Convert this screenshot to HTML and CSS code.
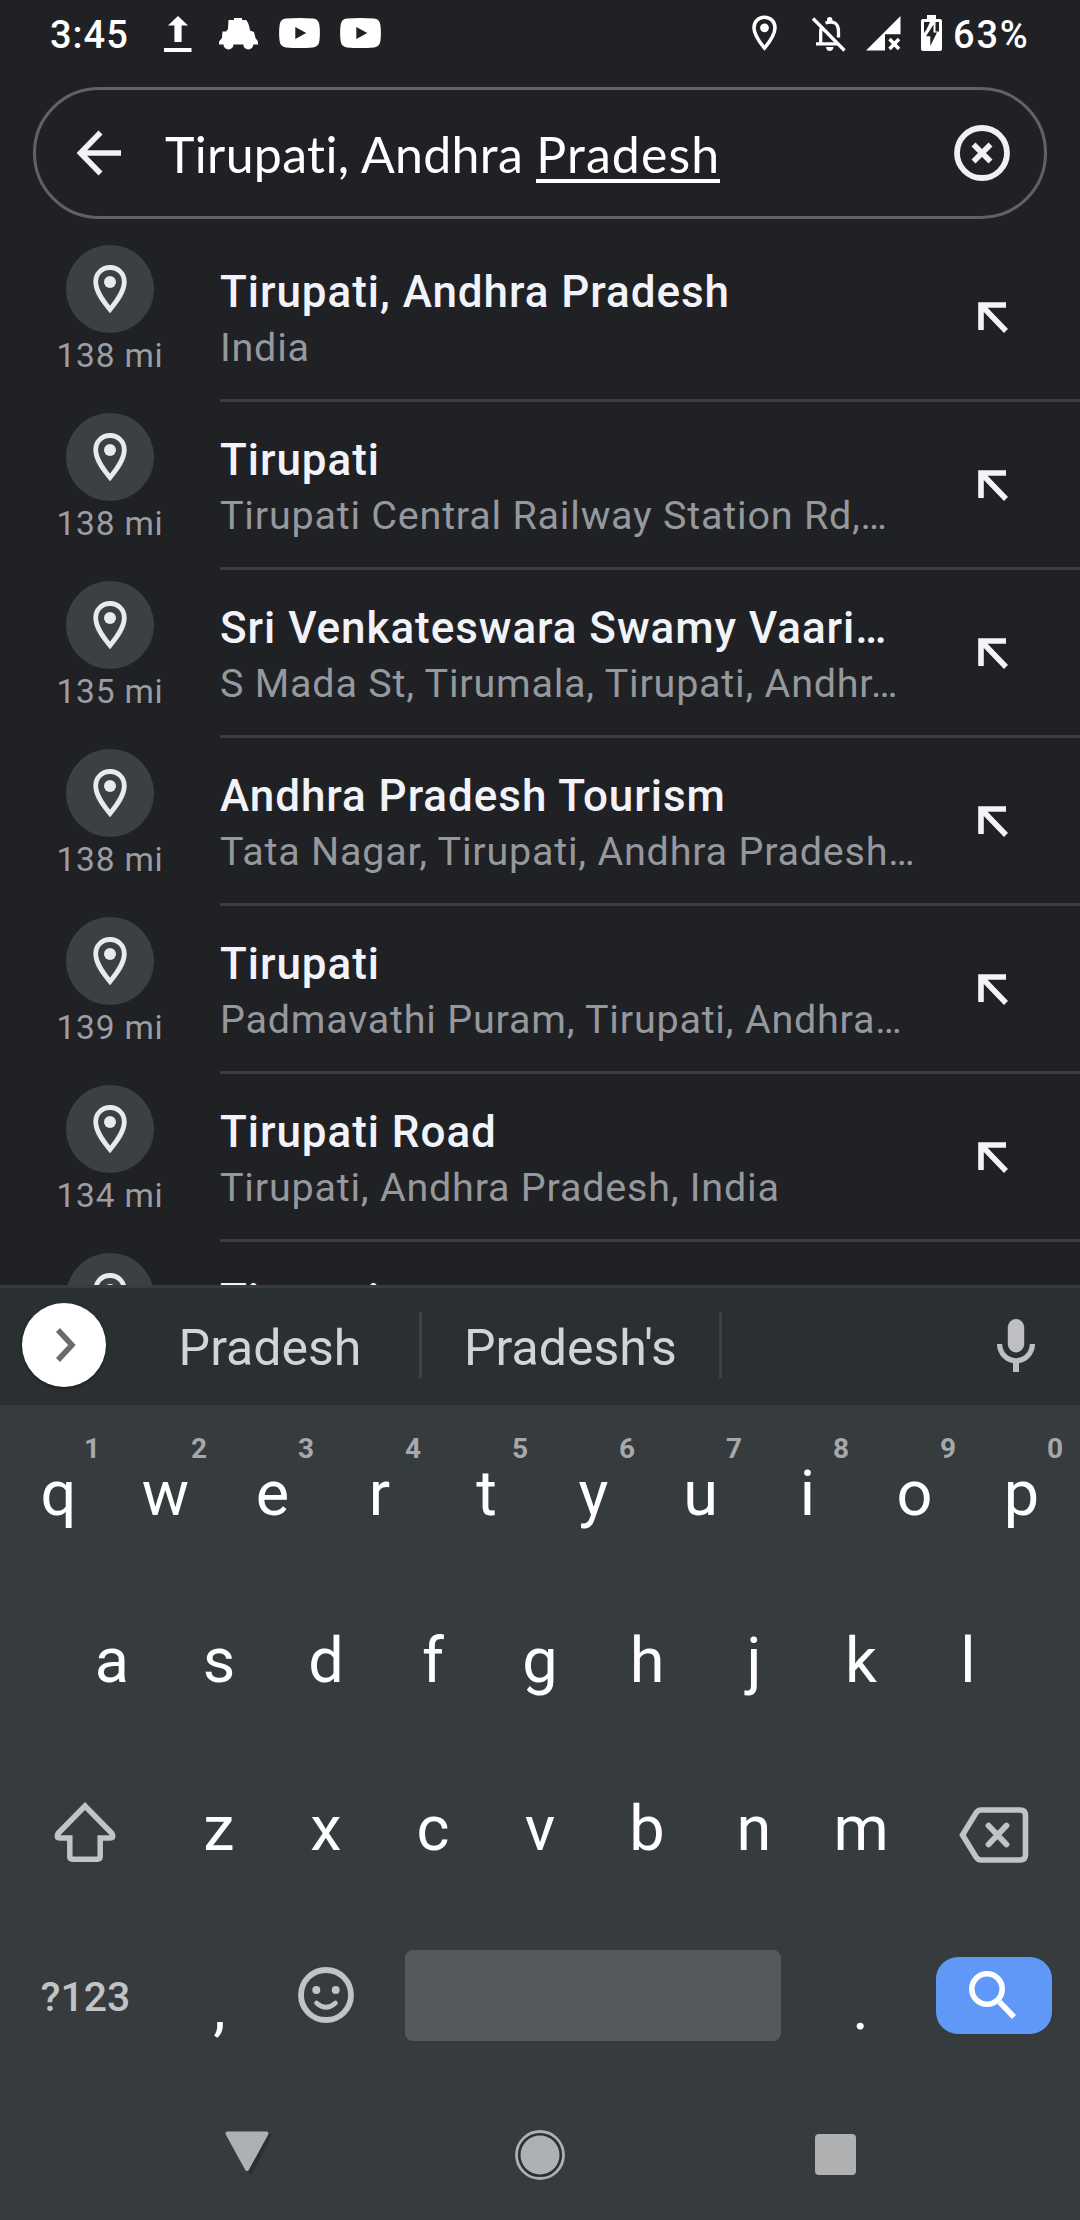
FILE: index.html
```html
<!DOCTYPE html>
<html lang="en">
<head>
<meta charset="utf-8">
<title>Search</title>
<link rel="stylesheet" href="styles.css">
</head>
<body>
<svg width="0" height="0" class="defs">
  <symbol id="pin" viewBox="0 0 34 48">
    <path d="M17 2.5C8.700 2.500 2.700 8.800 2.700 16.800C2.700 26.500 10 36 17 44.500C24 36 31.300 26.500 31.300 16.800C31.300 8.800 25.300 2.500 17 2.500Z" fill="none" stroke="currentColor" stroke-width="4.800"/>
    <circle cx="17" cy="17" r="6" fill="currentColor"/>
  </symbol>
  <symbol id="insert" viewBox="0 0 30 31">
    <path d="M28 3H3V28M3 3L28 29" fill="none" stroke="currentColor" stroke-width="5.600"/>
  </symbol>
  <symbol id="video" viewBox="0 0 41 30">
    <path fill-rule="evenodd" fill="currentColor" d="M7 .6Q20.500-.6 34 .6Q39.500 1 40.400 7Q41.400 15 40.400 23Q39.500 29 34 29.400Q20.500 30.600 7 29.400Q1.500 29 .6 23Q-.4 15 .6 7Q1.500 1 7 .6ZM16.300 9V21L27.300 15Z"/>
  </symbol>
</svg>
<main class="phone">
  <header class="status">
    <span class="time">3:45</span>
    <svg class="s-upload" viewBox="0 0 28 36"><path fill="#fff" d="M14 0L24 9.500H17.600V26H10.400V9.500H4ZM0 32H27.500V36H0Z"/></svg>
    <svg class="s-car" viewBox="0 0 39 32"><path fill="#fff" d="M9.500 2H15V0H23V2H27Q30 5 31 12.500L35 14L36.500 20L39 23.500V26.500H34.300A5 5 0 0 1 24.300 26.500H14.500A5 5 0 0 1 4.500 26.500H0V23.500L3 20L3.500 13.500H7L9 11Z"/></svg>
    <svg class="s-video"><use href="#video"/></svg>
    <svg class="s-video"><use href="#video"/></svg>
    <span class="spacer"></span>
    <svg class="s-pin"><use href="#pin"/></svg>
    <svg class="s-bell" viewBox="0 0 34 35"><g fill="none" stroke="#fff" stroke-width="3.300"><path d="M1 1.500L32.500 33.500"/><path d="M4 26.800H26M8.700 25.500V15Q8.700 12 10 10M13.500 6Q26.500 2 26.500 15V20.500"/></g><path fill="#fff" d="M15 5V2.500Q15 0 17.700 0T20.400 2.500V5ZM14 30H21.500Q21 34 17.700 34T14 30Z"/></svg>
    <svg class="s-signal" viewBox="0 0 35 35"><path fill="#fff" d="M34.500 0V18.300H19V34.500H0Z"/><path d="M23.500 23L33 33M33 23L23.500 33" stroke="#fff" stroke-width="3.500"/></svg>
    <svg class="s-battery" viewBox="0 0 21 36"><path fill="#fff" d="M6 0H15V4H19Q21 4 21 6V34Q21 36 19 36H2Q0 36 0 34V6Q0 4 2 4H6Z"/><path fill="#202125" d="M3 7H9L5.500 14.500L3 18ZM14.500 7H18V16.500H14.500Z"/><path fill="#202125" d="M12.500 9.500L5 21.300H9.300V31L16 17.500H12.500Z"/></svg>
    <span class="battery">63%</span>
  </header>

  <div class="search">
    <svg class="back" viewBox="0 0 44 44"><path d="M23.500 1.500L3.500 22L23.500 42.500M3.500 22H44" fill="none" stroke="#f1f3f4" stroke-width="5.600"/></svg>
    <span class="query">Tirupati, Andhra <span class="composing">Pradesh</span></span>
    <svg class="clear" viewBox="0 0 56 56"><circle cx="28" cy="28" r="25" fill="none" stroke="#f0f0f5" stroke-width="5.800"/><path d="M19.500 19.500L36.500 36.500M36.500 19.500L19.500 36.500" stroke="#f0f0f5" stroke-width="5.600"/></svg>
  </div>

  <section class="results">
    <div class="row">
      <div class="place"><span class="disc"><svg><use href="#pin"/></svg></span><span class="dist">138 mi</span></div>
      <div class="info"><div class="text"><div class="title">Tirupati, Andhra Pradesh</div><div class="sub">India</div></div><svg class="insert"><use href="#insert"/></svg></div>
    </div>
    <div class="row">
      <div class="place"><span class="disc"><svg><use href="#pin"/></svg></span><span class="dist">138 mi</span></div>
      <div class="info"><div class="text"><div class="title">Tirupati</div><div class="sub">Tirupati Central Railway Station Rd,…</div></div><svg class="insert"><use href="#insert"/></svg></div>
    </div>
    <div class="row">
      <div class="place"><span class="disc"><svg><use href="#pin"/></svg></span><span class="dist">135 mi</span></div>
      <div class="info"><div class="text"><div class="title">Sri Venkateswara Swamy Vaari…</div><div class="sub">S Mada St, Tirumala, Tirupati, Andhr…</div></div><svg class="insert"><use href="#insert"/></svg></div>
    </div>
    <div class="row">
      <div class="place"><span class="disc"><svg><use href="#pin"/></svg></span><span class="dist">138 mi</span></div>
      <div class="info"><div class="text"><div class="title">Andhra Pradesh Tourism</div><div class="sub">Tata Nagar, Tirupati, Andhra Pradesh…</div></div><svg class="insert"><use href="#insert"/></svg></div>
    </div>
    <div class="row">
      <div class="place"><span class="disc"><svg><use href="#pin"/></svg></span><span class="dist">139 mi</span></div>
      <div class="info"><div class="text"><div class="title">Tirupati</div><div class="sub">Padmavathi Puram, Tirupati, Andhra…</div></div><svg class="insert"><use href="#insert"/></svg></div>
    </div>
    <div class="row">
      <div class="place"><span class="disc"><svg><use href="#pin"/></svg></span><span class="dist">134 mi</span></div>
      <div class="info"><div class="text"><div class="title">Tirupati Road</div><div class="sub">Tirupati, Andhra Pradesh, India</div></div><svg class="insert"><use href="#insert"/></svg></div>
    </div>
    <div class="row">
      <div class="place"><span class="disc"><svg><use href="#pin"/></svg></span></div>
      <div class="info"><div class="text"><div class="title">Tirupati</div></div></div>
    </div>
  </section>

  <section class="suggestions">
    <span class="expand"><svg viewBox="0 0 20 34"><path d="M2 2L16 17L2 32" fill="none" stroke="#6b6b6b" stroke-width="5.500"/></svg></span>
    <span class="word first">Pradesh</span>
    <span class="word second">Pradesh's</span>
    <svg class="mic" viewBox="0 0 38 53"><rect x="10.800" y="0" width="16.400" height="33.500" rx="8.200" fill="#bebfc2"/><path d="M2.600 25A16.400 16.800 0 0 0 35.400 25" fill="none" stroke="#bebfc2" stroke-width="5.200"/><path d="M19 42V53" stroke="#bebfc2" stroke-width="6"/></svg>
  </section>

  <section class="keyboard">
    <div class="keys top">
      <span class="key">q<i class="hint">1</i></span><span class="key">w<i class="hint">2</i></span><span class="key">e<i class="hint">3</i></span><span class="key">r<i class="hint">4</i></span><span class="key">t<i class="hint">5</i></span><span class="key">y<i class="hint">6</i></span><span class="key">u<i class="hint">7</i></span><span class="key">i<i class="hint">8</i></span><span class="key">o<i class="hint">9</i></span><span class="key">p<i class="hint">0</i></span>
    </div>
    <div class="keys">
      <span class="key">a</span><span class="key">s</span><span class="key">d</span><span class="key">f</span><span class="key">g</span><span class="key">h</span><span class="key">j</span><span class="key">k</span><span class="key">l</span>
    </div>
    <div class="keys">
      <span class="wide"><svg class="shift" viewBox="0 0 62 60"><path d="M31 4L4 31.500Q1.500 36 6 36H15.800V54.500Q15.800 57.200 18.500 57.200H43.500Q46.200 57.200 46.200 54.500V36H56Q60.500 36 58 31.500Z" fill="none" stroke="#c1c3c6" stroke-width="5.500"/></svg></span>
      <span class="key">z</span><span class="key">x</span><span class="key">c</span><span class="key">v</span><span class="key">b</span><span class="key">n</span><span class="key">m</span>
      <span class="wide"><svg class="erase" viewBox="0 0 70 56"><path d="M3.500 28L17 6Q19 3 22 3H61Q66.500 3 66.500 8.500V47.500Q66.500 53 61 53H22Q19 53 17 50Z" fill="none" stroke="#c1c3c6" stroke-width="5.600"/><path d="M29.500 18.500L47.500 37.500M47.500 18.500L29.500 37.500" stroke="#c1c3c6" stroke-width="5.800" stroke-linecap="round"/></svg></span>
    </div>
    <div class="keys bottom">
      <span class="wide symbols">?123</span>
      <span class="key">,</span>
      <svg class="emoji" viewBox="0 0 56 56"><g fill="none" stroke="#c1c3c6"><circle cx="28" cy="28" r="25" stroke-width="5.800"/><path d="M18.500 36Q28 44.500 37.500 36" stroke-width="4.600" stroke-linecap="round"/></g><circle cx="18.300" cy="23" r="4" fill="#c1c3c6"/><circle cx="37.700" cy="23" r="4" fill="#c1c3c6"/></svg>
      <span class="space"></span>
      <span class="key">.</span>
      <span class="go"><svg viewBox="0 0 50 50"><circle cx="19" cy="19" r="15.200" fill="none" stroke="#fff" stroke-width="5.600"/><path d="M31.500 32L46 47" stroke="#fff" stroke-width="5.600"/></svg></span>
    </div>
  </section>

  <nav class="nav">
    <svg class="n-back" viewBox="0 0 50 46"><path d="M4.500 1.800H42.500L23.500 38.500Z" transform="translate(3 3)" fill="#2b2f33" stroke="#2b2f33" stroke-width="4" stroke-linejoin="round"/><path d="M3.500 2.500H42.500L23 38Z" fill="#aeb1b3" stroke="#aeb1b3" stroke-width="4" stroke-linejoin="round"/></svg>
    <svg class="n-home" viewBox="0 0 52 52"><circle cx="26" cy="26" r="23.500" fill="#2c2f32" stroke="#aeb1b3" stroke-width="2.800"/><circle cx="26" cy="26" r="19.500" fill="#aeb1b3"/></svg>
    <span class="n-recent"></span>
  </nav>
</main>
</body>
</html>
```
FILE: styles.css
```css
* { box-sizing: border-box; }
body { margin: 0; background: #202125; font-family: Roboto, sans-serif; }
svg { display: block; flex: none; overflow: visible; }
.defs { position: absolute; }
.phone { width: 1080px; height: 2220px; display: flex; flex-direction: column; overflow: hidden; color: #fff; }

/* Status bar */
.status { height: 87px; flex: none; display: flex; align-items: flex-start; padding: 15px 0 0 50px; }
.time, .battery { font-size: 38px; line-height: 40px; font-weight: 500; white-space: nowrap; }
.time { width: 114px; letter-spacing: 1px; }
.battery { width: 127px; margin-left: 11px; letter-spacing: 1.8px; }
.s-upload { width: 28px; height: 36px; margin: 1px 27px 0 0; }
.s-car { width: 39px; height: 32px; margin: 3px 21px 0 0; }
.s-video { width: 41px; height: 30px; margin: 3px 20px 0 0; }
.spacer { flex: 1; }
.s-pin { width: 25px; height: 36px; margin-right: 35px; }
.s-bell { width: 34px; height: 35px; margin: 2px 20px 0 0; }
.s-signal { width: 35px; height: 35px; margin: 1px 20px 0 0; }
.s-battery { width: 21px; height: 36px; }

/* Search field */
.search { flex: none; height: 132px; margin: 0 33px; border: 3px solid #616266; border-radius: 66px; display: flex; align-items: center; padding: 0 34px 0 41px; }
.back { width: 44px; height: 44px; }
.query { flex: 1; margin-left: 44px; padding-top: 2px; font-family: Lato, sans-serif; font-size: 50px; line-height: 60px; letter-spacing: 0.35px; white-space: nowrap; }
.composing { display: inline-block; line-height: 49px; letter-spacing: 1.1px; border-bottom: 4px solid #fff; }
.clear { width: 56px; height: 56px; }

/* Results */
.results { flex: none; height: 1066px; padding-top: 15px; overflow: hidden; color: #f1f3f9; }
.row { display: flex; height: 168px; }
.place { width: 220px; display: flex; flex-direction: column; align-items: center; padding-top: 11px; }
.disc { width: 88px; height: 88px; flex: none; border-radius: 50%; background: #3c4043; color: #e8eaed; display: flex; align-items: center; justify-content: center; }
.disc svg { width: 34px; height: 48px; }
.dist { margin-top: 3px; font-size: 33.5px; line-height: 40px; letter-spacing: 0.8px; color: #9a9da1; white-space: nowrap; }
.info { width: 860px; display: flex; justify-content: space-between; border-bottom: 3px solid #3c3d42; padding-right: 72px; }
.text { padding-top: 32px; white-space: nowrap; }
.title { font-size: 44px; line-height: 52px; font-weight: 500; letter-spacing: 0.95px; }
.sub { margin-top: 6px; font-size: 39.5px; line-height: 48px; letter-spacing: 0.78px; color: #95989c; }
.insert { width: 30px; height: 31px; margin-top: 68px; }

/* Suggestion strip */
.suggestions { flex: none; height: 120px; background: #2a2f32; border-top: 3px solid #373a3f; display: flex; align-items: center; padding: 0 0 3px 22px; }
.expand { width: 84px; height: 84px; border-radius: 50%; background: #fff; display: flex; align-items: center; justify-content: center; padding-left: 3px; box-shadow: 0 1px 3px rgba(0, 0, 0, .45); }
.expand svg { width: 20px; height: 34px; }
.word { height: 66px; display: flex; align-items: center; justify-content: center; padding-top: 5px; font-size: 50px; line-height: 60px; color: #d1d5d8; border-right: 3px solid #3e4246; }
.first { width: 301px; margin-left: 15px; }
.second { width: 300px; }
.mic { width: 38px; height: 53px; margin-left: 275px; }

/* Keyboard */
.keyboard { flex: none; height: 676px; background: #363b3e; }
.keys { display: flex; justify-content: center; height: 168px; }
.key { position: relative; width: 107px; padding-top: 56px; text-align: center; font-size: 63px; line-height: 64px; }
.top .key { padding-top: 57px; }
.hint { position: absolute; left: 77px; width: 20px; top: 30px; font-size: 28px; line-height: 28px; font-style: normal; font-weight: 700; color: #a6a8ab; }
.wide { width: 161px; display: flex; justify-content: center; }
.shift { width: 62px; height: 60px; margin-top: 61px; }
.erase { width: 70px; height: 56px; margin: 66px 3px 0 0; }
.bottom { height: 172px; justify-content: flex-start; padding-left: 5px; align-items: center; }
.bottom .key { padding-top: 25px; }
.symbols { padding-top: 3px; font-size: 41px; line-height: 48px; font-weight: 500; color: #c1c3c6; }
.emoji { width: 56px; height: 56px; margin: 0 25px 0 25px; }
.space { width: 376px; height: 91px; margin: 0 26px 0 26px; border-radius: 8px; background: #55585c; }
.go { width: 116px; height: 77px; margin-left: 22px; border-radius: 22px; background: #5f98f7; display: flex; align-items: center; padding-left: 32px; }
.go svg { width: 50px; height: 50px; }

/* System navigation */
.nav { flex: none; height: 139px; background: #363b3e; display: grid; grid-template-columns: 1fr 52px 1fr; align-items: center; padding: 8px 224px 0; }
.n-back { width: 50px; height: 46px; margin-top: -2px; }
.n-home { width: 52px; height: 52px; }
.n-recent { justify-self: end; width: 41px; height: 41px; border-radius: 4px; background: #aeb0b2; }
```
